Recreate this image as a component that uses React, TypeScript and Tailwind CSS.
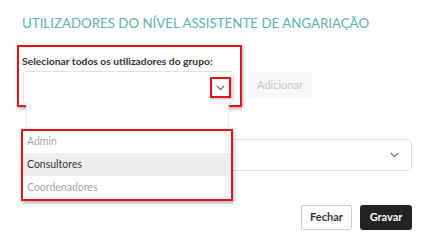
import React from "react";

function Chevron({ className = "" }: { className?: string }) {
  return (
    <svg width="9" height="6" viewBox="0 0 9 6" className={className} fill="none">
      <path d="M0.8 0.8 L4.5 4.6 L8.2 0.8" stroke="#666" strokeWidth="1.1" />
    </svg>
  );
}

export default function App() {
  return (
    <div
      className="relative w-[436px] h-[245px] bg-white overflow-hidden"
      style={{ fontFamily: "Lato, 'Noto Sans', sans-serif" }}
    >
      <div className="pl-[22px] pt-[15px]">
        <h1 className="text-[13.3px] leading-[16px] text-[#5db3ad] uppercase">
          Utilizadores do nível assistente de angariação
        </h1>
      </div>

      <div className="flex items-start ml-[17px] mt-[14px]">
        <div className="w-[225px] h-[62px] border-2 border-[#e3141c] shadow-[1px_2px_3px_rgba(0,0,0,0.3)] pl-[3px] pt-[7px]">
          <div className="text-[10.3px] leading-[14px] font-bold text-[#333]">
            Selecionar todos os utilizadores do grupo:
          </div>
          <div className="mt-[3px] ml-[1px] w-[211px] h-[33px] border border-[#e2e2e2] rounded-[3px] flex items-center justify-end pr-[2px]">
            <div className="w-[21px] h-[21px] border-2 border-[#e3141c] shadow-[1px_1px_2px_rgba(0,0,0,0.3)] flex items-center justify-center">
              <Chevron />
            </div>
          </div>
        </div>
        <button className="ml-[6px] mt-[27px] w-[64px] h-[26px] bg-[#f8f8f8] text-[#c4c4c4] text-[11px] rounded-[3px]">
          Adicionar
        </button>
      </div>

      <div className="ml-[22px] mt-[32px] w-[390px] h-[32px] border border-[#e2e2e2] rounded-[4px] flex items-center justify-end pr-[12px]">
        <Chevron />
      </div>

      <div className="flex justify-end gap-[8px] pr-[24px] mt-[34px]">
        <button className="w-[51px] h-[25px] border border-[#cfcfcf] rounded-[2px] text-[11px] font-bold text-[#333] bg-white">
          Fechar
        </button>
        <button className="w-[52px] h-[25px] rounded-[3px] text-[11px] font-bold text-white bg-[#232323]">
          Gravar
        </button>
      </div>

      <div className="absolute left-[26px] top-[103px] w-[203px] h-[97px] bg-white border-x border-[#f0f0f0]" />
      <div className="absolute left-[21px] top-[129px] w-[212px] h-[72px] border-2 border-[#e3141c] bg-white shadow-[1px_2px_3px_rgba(0,0,0,0.3)] flex flex-col text-[10.5px]">
        <div className="h-[22px] flex items-center pl-[4px] text-[#a5a5a5]">Admin</div>
        <div className="h-[23px] flex items-center pl-[4px] text-[#333] bg-[#eeeeee]">Consultores</div>
        <div className="h-[23px] flex items-center pl-[4px] text-[#a5a5a5]">Coordenadores</div>
      </div>
    </div>
  );
}
